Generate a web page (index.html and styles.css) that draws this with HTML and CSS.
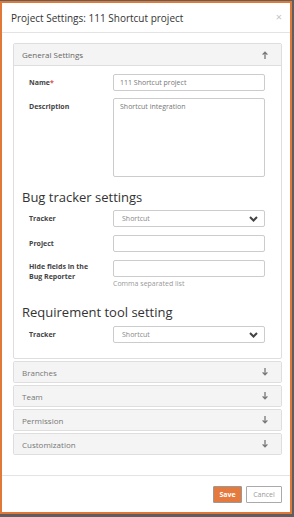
FILE: index.html
```html
<!DOCTYPE html>
<html lang="en">
<head>
    <meta charset="UTF-8">
    <meta name="viewport" content="width=device-width, initial-scale=1.0">
    <title>Project Settings</title>
    <link rel="stylesheet" href="styles.css">
</head>
<body>
    <div class="modal">
        <div class="modal-header">
            <h4>Project Settings: 111 Shortcut project</h4>
            <span class="close">&times;</span>
        </div>

        <div class="modal-body">
            <div class="panel">
                <div class="panel-heading">
                    <span>General Settings</span>
                    <svg class="arrow" width="6" height="8" viewBox="0 0 6 8"><path d="M3 1.2V8M0.6 3.6L3 1.2L5.4 3.6" fill="none" stroke="#777" stroke-width="1.3"/></svg>
                </div>
                <div class="panel-body">
                    <div class="row">
                        <label>Name<span class="req">*</span></label>
                        <input type="text" value="111 Shortcut project">
                    </div>
                    <div class="row">
                        <label>Description</label>
                        <textarea>Shortcut integration</textarea>
                    </div>

                    <h3>Bug tracker settings</h3>
                    <div class="row">
                        <label>Tracker</label>
                        <div class="select">
                            <span>Shortcut</span>
                            <svg width="9" height="6" viewBox="0 0 9 6"><path d="M1 1L4.5 4.5L8 1" fill="none" stroke="#444" stroke-width="2"/></svg>
                        </div>
                    </div>
                    <div class="row">
                        <label>Project</label>
                        <input type="text">
                    </div>
                    <div class="row">
                        <label class="two-line">Hide fields in the Bug Reporter</label>
                        <div>
                            <input type="text">
                            <p class="help">Comma separated list</p>
                        </div>
                    </div>

                    <h3 class="second">Requirement tool setting</h3>
                    <div class="row last">
                        <label>Tracker</label>
                        <div class="select">
                            <span>Shortcut</span>
                            <svg width="9" height="6" viewBox="0 0 9 6"><path d="M1 1L4.5 4.5L8 1" fill="none" stroke="#444" stroke-width="2"/></svg>
                        </div>
                    </div>
                </div>
            </div>

            <div class="panel collapsed">
                <div class="panel-heading">
                    <span>Branches</span>
                    <svg class="arrow" width="6" height="8" viewBox="0 0 6 8"><path d="M3 0V6.8M0.6 4.4L3 6.8L5.4 4.4" fill="none" stroke="#777" stroke-width="1.3"/></svg>
                </div>
            </div>
            <div class="panel collapsed">
                <div class="panel-heading">
                    <span>Team</span>
                    <svg class="arrow" width="6" height="8" viewBox="0 0 6 8"><path d="M3 0V6.8M0.6 4.4L3 6.8L5.4 4.4" fill="none" stroke="#777" stroke-width="1.3"/></svg>
                </div>
            </div>
            <div class="panel collapsed">
                <div class="panel-heading">
                    <span>Permission</span>
                    <svg class="arrow" width="6" height="8" viewBox="0 0 6 8"><path d="M3 0V6.8M0.6 4.4L3 6.8L5.4 4.4" fill="none" stroke="#777" stroke-width="1.3"/></svg>
                </div>
            </div>
            <div class="panel collapsed">
                <div class="panel-heading">
                    <span>Customization</span>
                    <svg class="arrow" width="6" height="8" viewBox="0 0 6 8"><path d="M3 0V6.8M0.6 4.4L3 6.8L5.4 4.4" fill="none" stroke="#777" stroke-width="1.3"/></svg>
                </div>
            </div>
        </div>

        <div class="modal-footer">
            <button class="btn-save">Save</button>
            <button class="btn-cancel">Cancel</button>
        </div>
    </div>
</body>
</html>
```

FILE: styles.css
```css
/* Reset */
* {
    margin: 0;
    padding: 0;
    box-sizing: border-box;
}

/* Dimmed page behind the dialog */
body {
    font-family: 'Open Sans', 'Liberation Sans', sans-serif;
    background: #5e5e5e;
    color: #333;
    width: 294px;
    height: 517px;
    overflow: hidden;
}

/* Dialog box */
.modal {
    width: 292px;
    height: 513px;
    margin-top: 1px;
    background: #fff;
    border: 2px solid #e07838;
    display: flex;
    flex-direction: column;
}

/* Header */
.modal-header {
    height: 30px;
    border-bottom: 1px solid #e3e3e3;
    display: flex;
    align-items: center;
    justify-content: space-between;
    padding: 0 8px 0 9px;
}

.modal-header h4 {
    font-size: 10px;
    font-weight: normal;
    color: #333;
}

.close {
    color: #c4c4c4;
    font-size: 11px;
    line-height: 1;
    margin-top: -2px;
}

/* Body */
.modal-body {
    flex: 1;
    padding: 10px 8px 0 11px;
}

.panel {
    border: 1px solid #dedede;
    border-radius: 2px;
    background: #fff;
}

.panel.collapsed {
    margin-top: 2px;
}

.panel-heading {
    height: 22px;
    background: #f4f4f4;
    display: flex;
    align-items: center;
    justify-content: space-between;
    padding: 0 13px 0 8px;
    font-size: 8px;
    color: #666;
}

.panel.collapsed .panel-heading {
    height: 20px;
    color: #777;
}

.panel:not(.collapsed) .panel-heading {
    border-bottom: 1px solid #dedede;
}

.panel-body {
    padding: 8px 15px 15px 15px;
}

/* Form rows */
.row {
    display: grid;
    grid-template-columns: 84px 152px;
    margin-bottom: 8px;
}

.row:first-child {
    margin-bottom: 7px;
}

.row.last {
    margin-bottom: 0;
}

label {
    font-size: 7px;
    font-weight: bold;
    color: #444;
    line-height: 11px;
    padding-top: 3px;
}

label.two-line {
    line-height: 10px;
    padding-top: 2px;
    padding-right: 10px;
}

.req {
    color: #d9534f;
}

input, textarea, .select {
    width: 152px;
    height: 17px;
    border: 1px solid #ccc;
    border-radius: 2px;
    font-family: inherit;
    font-size: 7px;
    color: #777;
    padding: 0 6px;
    background: #fff;
    display: block;
}

textarea {
    height: 79px;
    padding-top: 3px;
    resize: none;
    line-height: 10px;
}

.select {
    display: flex;
    align-items: center;
    justify-content: space-between;
    padding: 0 6px 0 8px;
    color: #888;
}

.help {
    font-size: 7px;
    color: #999;
    line-height: 10px;
    margin-top: 2px;
}

/* Section headings */
h3 {
    font-size: 13px;
    font-weight: normal;
    color: #333;
    line-height: 16px;
    margin: 12px 0 5px -7px;
}

h3.second {
    margin-top: 15px;
    margin-bottom: 6px;
}

/* Footer */
.modal-footer {
    height: 37px;
    border-top: 1px solid #e3e3e3;
    display: flex;
    justify-content: flex-end;
    gap: 4px;
    padding: 10px 8px 0 0;
}

.modal-footer button {
    height: 17px;
    font-family: inherit;
    font-size: 7px;
    border-radius: 1px;
}

.btn-save {
    width: 29px;
    background: #e57a3e;
    border: 1px solid #999;
    color: #fff;
    font-weight: bold;
}

.btn-cancel {
    width: 36px;
    background: #fff;
    border: 1px solid #aaa;
    color: #999;
}
```
